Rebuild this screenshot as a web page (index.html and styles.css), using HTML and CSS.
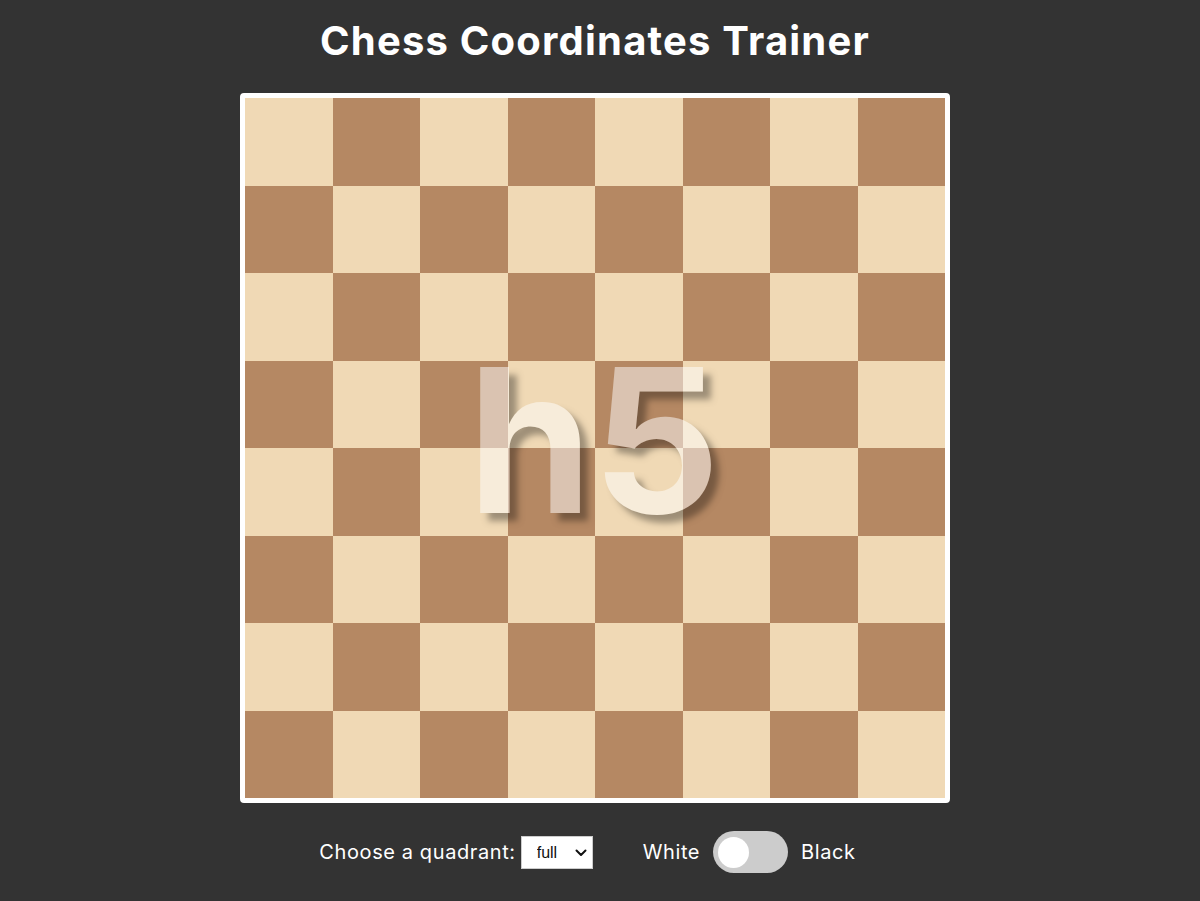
FILE: index.html
```html
<!DOCTYPE html>
<html lang="en">
<head>
<meta charset="utf-8">
<title>Chess Coordinates Trainer</title>
<link rel="stylesheet" href="styles.css">
</head>
<body>
<main class="app">
  <h1 class="title">Chess Coordinates Trainer</h1>
  <div class="board-frame">
    <div class="board">
      <div class="sq l"></div><div class="sq d"></div><div class="sq l"></div><div class="sq d"></div><div class="sq l"></div><div class="sq d"></div><div class="sq l"></div><div class="sq d"></div>
      <div class="sq d"></div><div class="sq l"></div><div class="sq d"></div><div class="sq l"></div><div class="sq d"></div><div class="sq l"></div><div class="sq d"></div><div class="sq l"></div>
      <div class="sq l"></div><div class="sq d"></div><div class="sq l"></div><div class="sq d"></div><div class="sq l"></div><div class="sq d"></div><div class="sq l"></div><div class="sq d"></div>
      <div class="sq d"></div><div class="sq l"></div><div class="sq d"></div><div class="sq l"></div><div class="sq d"></div><div class="sq l"></div><div class="sq d"></div><div class="sq l"></div>
      <div class="sq l"></div><div class="sq d"></div><div class="sq l"></div><div class="sq d"></div><div class="sq l"></div><div class="sq d"></div><div class="sq l"></div><div class="sq d"></div>
      <div class="sq d"></div><div class="sq l"></div><div class="sq d"></div><div class="sq l"></div><div class="sq d"></div><div class="sq l"></div><div class="sq d"></div><div class="sq l"></div>
      <div class="sq l"></div><div class="sq d"></div><div class="sq l"></div><div class="sq d"></div><div class="sq l"></div><div class="sq d"></div><div class="sq l"></div><div class="sq d"></div>
      <div class="sq d"></div><div class="sq l"></div><div class="sq d"></div><div class="sq l"></div><div class="sq d"></div><div class="sq l"></div><div class="sq d"></div><div class="sq l"></div>
    </div>
    <div class="coord">h5</div>
  </div>
  <div class="controls">
    <div class="group">
      <label class="label" for="quadrant">Choose a quadrant:</label>
      <span class="select-wrap">
        <select class="select" id="quadrant">
          <option>full</option>
          <option>a1-d4</option>
          <option>e1-h4</option>
          <option>a5-d8</option>
          <option>e5-h8</option>
        </select>
        <svg class="chevron" width="12" height="8" viewBox="0 0 12 8" aria-hidden="true"><path d="M1.5 1.5 L6 6 L10.5 1.5" fill="none" stroke="#111" stroke-width="2" stroke-linecap="round" stroke-linejoin="round"/></svg>
      </span>
    </div>
    <div class="group side">
      <span class="label">White</span>
      <span class="switch"><span class="knob"></span></span>
      <span class="label">Black</span>
    </div>
  </div>
</main>
</body>
</html>
```
FILE: styles.css
```css
html, body {
  margin: 0;
  padding: 0;
}
body {
  background: #333333;
  color: #ffffff;
  font-family: Inter, "Noto Sans", sans-serif;
  height: 901px;
  overflow: hidden;
}
.app {
  display: flex;
  flex-direction: column;
  align-items: center;
  padding-right: 10px;
}
.title {
  margin: 17px 0 28px 0;
  font-size: 40px;
  line-height: 48px;
  font-weight: 700;
  letter-spacing: 1.2px;
}
.board-frame {
  position: relative;
  border: 5px solid #ffffff;
  border-radius: 4px;
  width: 700px;
  height: 700px;
}
.board {
  display: grid;
  grid-template-columns: repeat(8, 87.5px);
  grid-template-rows: repeat(8, 87.5px);
}
.sq.l { background: #f0d9b5; }
.sq.d { background: #b58863; }
.coord {
  position: absolute;
  inset: 0;
  display: flex;
  align-items: center;
  justify-content: center;
  font-size: 200px;
  font-weight: 700;
  color: #ffffff;
  opacity: 0.5;
  text-shadow: 8px 8px 6px rgba(0, 0, 0, 0.68);
  padding: 0 2px 16px 0;
  box-sizing: border-box;
  letter-spacing: 0;
}
.controls {
  display: flex;
  align-items: center;
  gap: 50px;
  margin-top: 28px;
  margin-left: -15px;
}
.group {
  display: flex;
  align-items: center;
  gap: 5px;
}
.group.side {
  gap: 13px;
}
.label {
  font-size: 20px;
  line-height: 24px;
  letter-spacing: 0.6px;
  color: #ffffff;
}
.select-wrap {
  position: relative;
  display: flex;
}
.select {
  appearance: none;
  -webkit-appearance: none;
  width: 72px;
  height: 33px;
  font-family: "Liberation Sans", Arial, sans-serif;
  font-size: 16px;
  padding: 0 20px 0 15px;
  background: #ffffff;
  color: #111111;
  border: 1px solid #cccccc;
  border-radius: 0;
}
.chevron {
  position: absolute;
  right: 6px;
  top: 13px;
  pointer-events: none;
}
.switch {
  display: flex;
  align-items: center;
  width: 75px;
  height: 42px;
  padding: 0 5px;
  box-sizing: border-box;
  background: #cccccc;
  border-radius: 21px;
}
.knob {
  width: 31px;
  height: 31px;
  border-radius: 50%;
  background: #ffffff;
}
```
